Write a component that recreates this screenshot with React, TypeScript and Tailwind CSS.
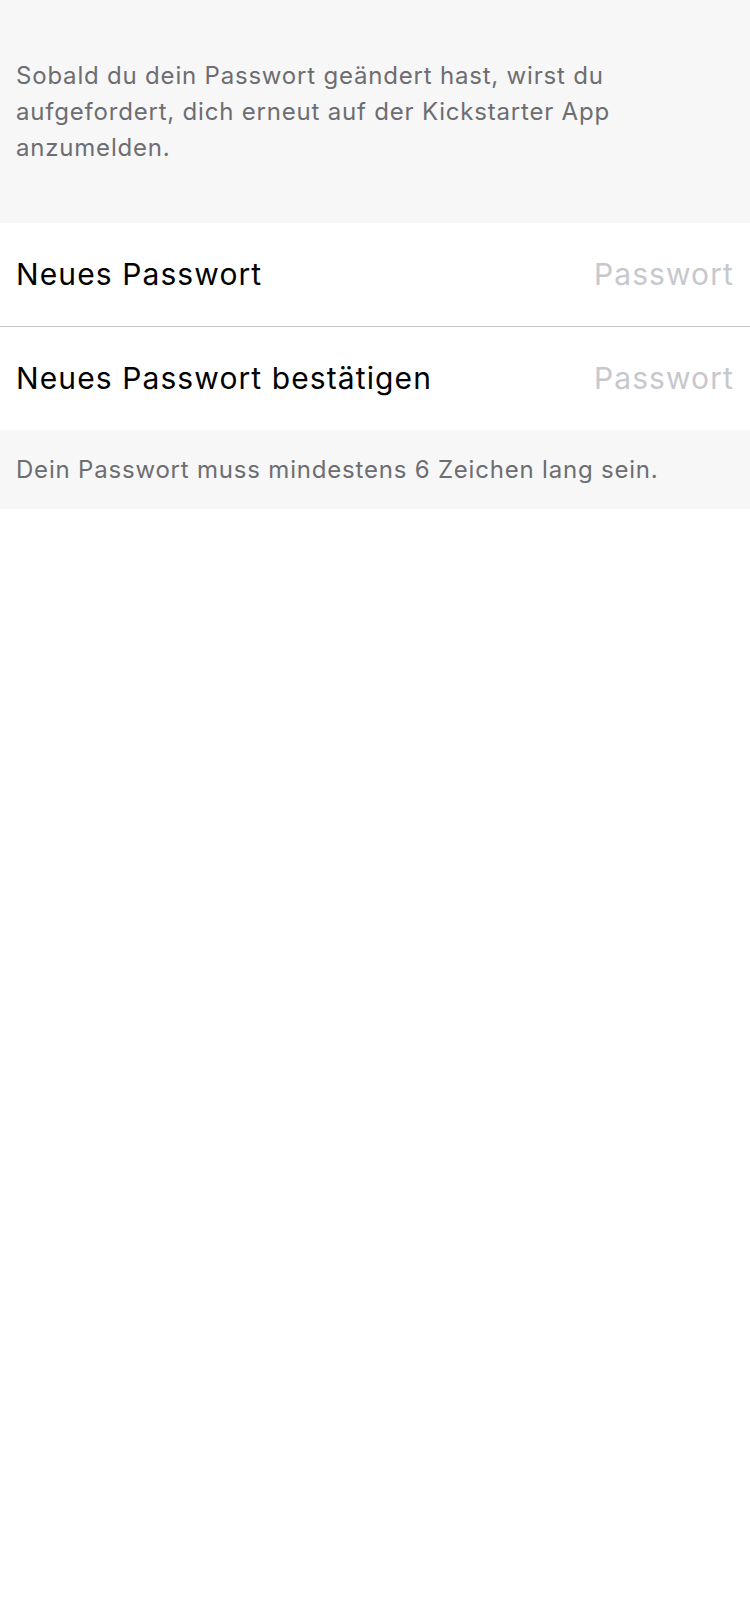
import React from 'react'

function PasswordRow({ label, border }: { label: string; border?: boolean }) {
  return (
    <div className={`flex items-center justify-between bg-white px-4 ${border ? 'h-[104px] border-b border-[#c8c7cc]' : 'h-[103px]'}`}>
      <span className="text-[30px] tracking-[1.1px] text-black">{label}</span>
      <input
        type="password"
        placeholder="Passwort"
        className="w-[300px] bg-transparent text-right text-[30px] tracking-[1.1px] outline-none placeholder:text-[#c7c7cd]"
      />
    </div>
  )
}

export default function App() {
  return (
    <div className="min-h-[1624px] w-full bg-white font-['Inter',sans-serif]">
      <div className="bg-[#f7f7f7] px-4 pb-[57px] pt-[58px]">
        <p className="text-[24px] leading-[36px] tracking-[0.8px] text-[#6d6d72]">
          Sobald du dein Passwort geändert hast, wirst du aufgefordert, dich erneut auf der Kickstarter App anzumelden.
        </p>
      </div>
      <PasswordRow label="Neues Passwort" border />
      <PasswordRow label="Neues Passwort bestätigen" />
      <div className="flex h-[79px] items-center bg-[#f7f7f7] px-4">
        <p className="text-[24px] tracking-[0.8px] text-[#6d6d72]">Dein Passwort muss mindestens 6 Zeichen lang sein.</p>
      </div>
    </div>
  )
}
